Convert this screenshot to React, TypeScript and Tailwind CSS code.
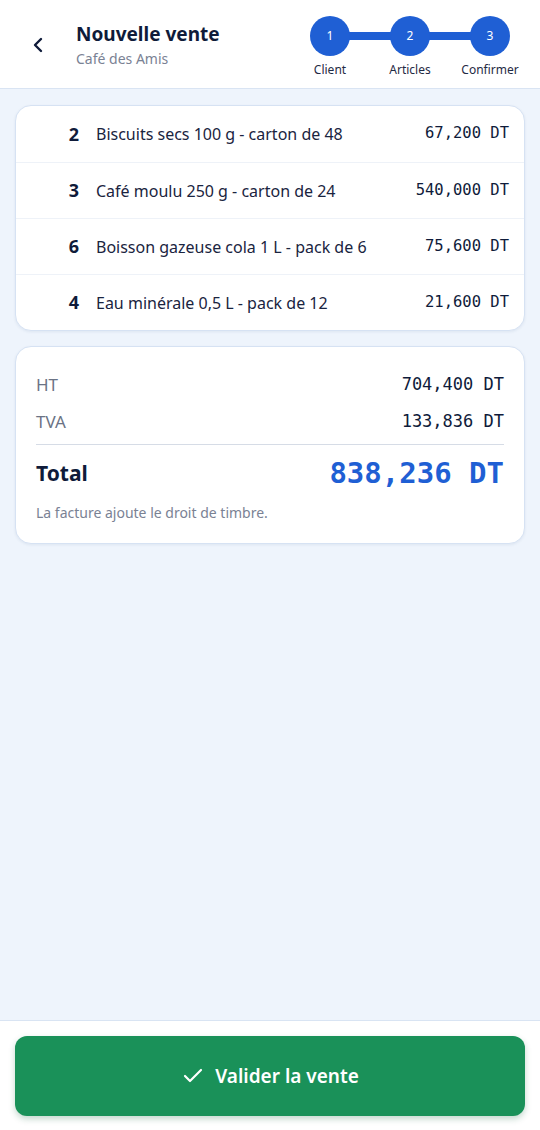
import { ChevronLeft, Check } from 'lucide-react'

const items = [
  { qty: 2, name: 'Biscuits secs 100 g - carton de 48', price: '67,200 DT' },
  { qty: 3, name: 'Café moulu 250 g - carton de 24', price: '540,000 DT' },
  { qty: 6, name: 'Boisson gazeuse cola 1 L - pack de 6', price: '75,600 DT' },
  { qty: 4, name: 'Eau minérale 0,5 L - pack de 12', price: '21,600 DT' },
]

const steps = ['Client', 'Articles', 'Confirmer']

const sans = 'font-["Noto_Sans",sans-serif]'
const mono = 'font-["DejaVu_Sans_Mono",monospace]'

export default function App() {
  return (
    <div className={`h-[1130px] w-[540px] flex flex-col bg-[#eef4fc] text-[#0f1b3a] ${sans}`}>
      {/* Header */}
      <header className="h-[89px] shrink-0 bg-white border-b border-[#d9e4f3] flex items-start">
        <button className="ml-[26px] mt-[33px] w-6 h-6 flex items-center justify-center text-[#0f1b3a]">
          <ChevronLeft className="w-6 h-6" strokeWidth={2.4} />
        </button>
        <div className="ml-[26px] mt-[21px]">
          <h1 className="text-[19px] font-bold leading-[26px]">Nouvelle vente</h1>
          <p className="mt-[2px] text-[14px] leading-[20px] text-[#7a8294]">Café des Amis</p>
        </div>

        {/* Stepper */}
        <div className="ml-auto mr-[10px] mt-[16px] relative">
          <div className="absolute left-[40px] right-[40px] top-[16px] h-[8px] bg-[#1f5fd4]" />
          <div className="relative flex">
            {steps.map((s, i) => (
              <div key={s} className="w-[80px] flex flex-col items-center">
                <div className="w-[40px] h-[40px] rounded-full bg-[#1f5fd4] text-white text-[12px] flex items-center justify-center">
                  {i + 1}
                </div>
                <span className="mt-[6px] text-[12px] leading-[16px] text-[#1f2a44]">{s}</span>
              </div>
            ))}
          </div>
        </div>
      </header>

      <main className="flex-1 px-[15px] pt-[16px] flex flex-col gap-[15px]">
        {/* Items */}
        <div className="bg-white rounded-[16px] border border-[#d6e2f3] shadow-[0_1px_3px_rgba(30,60,120,0.08)]">
          {items.map((it, i) => (
            <div
              key={it.name}
              className={`h-[56px] flex items-center pl-[16px] pr-[15px] ${i > 0 ? 'border-t border-[#eef2f8]' : ''}`}
            >
              <span className="w-[47px] text-right text-[18px] font-bold">{it.qty}</span>
              <span className="ml-[17px] text-[16px] text-[#1a2440]">{it.name}</span>
              <span className={`ml-auto text-[15.5px] ${mono}`}>{it.price}</span>
            </div>
          ))}
        </div>

        {/* Totals */}
        <div className="bg-white rounded-[16px] border border-[#d6e2f3] shadow-[0_1px_3px_rgba(30,60,120,0.08)] px-[20px] pt-[22px] pb-[20px]">
          <div className="flex items-center justify-between h-[32px]">
            <span className="text-[17px] text-[#6b7385]">HT</span>
            <span className={`text-[17px] ${mono}`}>704,400 DT</span>
          </div>
          <div className="flex items-center justify-between h-[32px] mt-[5px]">
            <span className="text-[17px] text-[#6b7385]">TVA</span>
            <span className={`text-[17px] ${mono}`}>133,836 DT</span>
          </div>
          <div className="mt-[6px] border-t border-[#d6dce6]" />
          <div className="flex items-center justify-between mt-[11px] h-[36px]">
            <span className="text-[21px] font-bold">Total</span>
            <span className={`text-[29px] font-bold text-[#1f5fd4] ${mono}`}>838,236 DT</span>
          </div>
          <p className="mt-[10px] text-[14px] text-[#7a8294]">La facture ajoute le droit de timbre.</p>
        </div>
      </main>

      {/* Footer */}
      <footer className="shrink-0 bg-white border-t border-[#d9e4f3] px-[15px] pt-[15px] pb-[14px]">
        <button className="w-full h-[80px] rounded-[12px] bg-[#1a9159] text-white flex items-center justify-center gap-[10px] shadow-[0_3px_6px_rgba(20,100,60,0.25)]">
          <Check className="w-6 h-6" strokeWidth={2.2} />
          <span className="text-[19px] font-semibold">Valider la vente</span>
        </button>
      </footer>
    </div>
  )
}
